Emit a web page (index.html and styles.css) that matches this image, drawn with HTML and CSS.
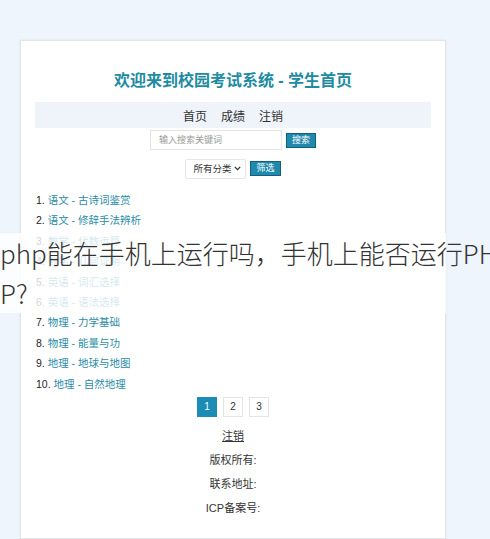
FILE: index.html
```html
<!DOCTYPE html>
<html lang="zh-CN">
<head>
<meta charset="utf-8">
<title>学生首页</title>
<link rel="stylesheet" href="styles.css">
</head>
<body>
<div class="page">
  <div class="card">
    <h1 class="title">欢迎来到校园考试系统 - 学生首页</h1>
    <nav class="nav">
      <a href="#">首页</a>
      <a href="#">成绩</a>
      <a href="#">注销</a>
    </nav>
    <form class="search">
      <input class="search-input" type="text" placeholder="输入搜索关键词">
      <button class="btn" type="button">搜索</button>
    </form>
    <form class="filter">
      <div class="select-wrap">
        <select class="filter-select">
          <option>所有分类</option>
        </select>
        <svg class="chevron" width="7" height="5" viewBox="0 0 7 5"><path d="M0.8 0.9 L3.5 3.6 L6.2 0.9" fill="none" stroke="#333" stroke-width="1.3"/></svg>
      </div>
      <button class="btn" type="button">筛选</button>
    </form>
    <ol class="list">
      <li><a href="#">语文 - 古诗词鉴赏</a></li>
      <li><a href="#">语文 - 修辞手法辨析</a></li>
      <li><a href="#">数学 - 代数运算</a></li>
      <li><a href="#">数学 - 几何证明</a></li>
      <li><a href="#">英语 - 词汇选择</a></li>
      <li><a href="#">英语 - 语法选择</a></li>
      <li><a href="#">物理 - 力学基础</a></li>
      <li><a href="#">物理 - 能量与功</a></li>
      <li><a href="#">地理 - 地球与地图</a></li>
      <li><a href="#">地理 - 自然地理</a></li>
    </ol>
    <div class="pager">
      <span class="page-btn active">1</span>
      <span class="page-btn">2</span>
      <span class="page-btn">3</span>
    </div>
    <footer class="footer">
      <a class="logout" href="#">注销</a>
      <p>版权所有:</p>
      <p>联系地址:</p>
      <p>ICP备案号:</p>
    </footer>
  </div>
  <div class="overlay">
    <div class="overlay-text">php能在手机上运行吗，手机上能否运行PH<br>P?</div>
  </div>
</div>
</body>
</html>
```

FILE: styles.css
```css
html, body {
  margin: 0;
  padding: 0;
}
body {
  background: #eef5fc;
  font-family: "Liberation Sans", "Noto Sans CJK SC", sans-serif;
  color: #333;
}
.page {
  position: relative;
  width: 490px;
  height: 539px;
  overflow: hidden;
  padding: 40px 0 0 20px;
  box-sizing: border-box;
}
.card {
  width: 426px;
  box-sizing: border-box;
  background: #fff;
  border: 1px solid #e2e4e6;
  box-shadow: 0 0 3px rgba(0,0,0,0.06);
  padding: 29px 14px 18px 14px;
  display: flex;
  flex-direction: column;
  align-items: center;
}
.title {
  margin: 0;
  font-size: 16px;
  line-height: 22px;
  font-weight: bold;
  color: #1e8ba3;
  font-family: "Liberation Sans", "Noto Sans CJK SC", sans-serif;
}
.nav {
  margin-top: 10px;
  align-self: stretch;
  height: 26px;
  background: #eef4fa;
  display: flex;
  justify-content: center;
  align-items: center;
  gap: 14px;
  font-size: 12px;
}
.nav a {
  color: #333;
  text-decoration: none;
}
.search {
  margin: 2px 0 0 0;
  display: flex;
  align-items: center;
  gap: 4px;
}
.search-input {
  width: 132px;
  height: 20px;
  box-sizing: border-box;
  border: 1px solid #e4e4e4;
  padding: 0 8px;
  font-size: 9px;
  font-family: "Liberation Sans", "Noto Sans CJK SC", sans-serif;
  color: #999;
  outline: none;
}
.search-input::placeholder {
  color: #9a9a9a;
}
.btn {
  height: 15px;
  padding: 0 5px;
  box-sizing: border-box;
  background: #1f8aae;
  color: #fff;
  border: 1px solid #175e7a;
  font-size: 9px;
  line-height: 13px;
  font-family: "Liberation Sans", "Noto Sans CJK SC", sans-serif;
  border-radius: 0;
}
.filter {
  margin: 8px 0 0 0;
  display: flex;
  align-items: center;
  gap: 4px;
}
.select-wrap {
  position: relative;
  width: 61px;
  height: 20px;
}
.filter-select {
  appearance: none;
  -webkit-appearance: none;
  width: 61px;
  height: 20px;
  box-sizing: border-box;
  border: 1px solid #e6e6e6;
  border-radius: 2px;
  background: #fff;
  font-size: 9.5px;
  color: #333;
  font-family: "Liberation Sans", "Noto Sans CJK SC", sans-serif;
  padding: 0 0 0 7px;
  outline: none;
}
.chevron {
  position: absolute;
  right: 5px;
  top: 8px;
  pointer-events: none;
}
.list {
  margin: 12px 0 0 0;
  padding: 0 0 0 1px;
  align-self: stretch;
  list-style: none;
  counter-reset: item;
  font-size: 10.5px;
}
.list li {
  counter-increment: item;
  height: 20.4px;
  line-height: 20.4px;
  color: #222;
}
.list li::before {
  content: counter(item) ". ";
}
.list a {
  color: #2b8ca7;
  text-decoration: none;
}
.pager {
  margin-top: 3px;
  display: flex;
  gap: 6px;
}
.page-btn {
  width: 20px;
  height: 20px;
  box-sizing: border-box;
  border: 1px solid #e4e4e4;
  display: flex;
  align-items: center;
  justify-content: center;
  font-size: 10px;
  color: #333;
  background: #fff;
}
.page-btn.active {
  background: #1b8db4;
  border-color: #1b8db4;
  color: #fff;
}
.footer {
  margin-top: 7px;
  display: flex;
  flex-direction: column;
  align-items: center;
  font-size: 11px;
}
.footer p {
  margin: 0;
  line-height: 24px;
  color: #333;
}
.logout {
  line-height: 24px;
  color: #333;
  text-decoration: underline;
}
.overlay {
  position: absolute;
  top: 233px;
  left: 0;
  width: 446px;
  height: 80px;
  background: rgba(255,255,255,0.8);
}
.overlay-text {
  width: 490px;
  white-space: nowrap;
  font-family: "Noto Sans CJK SC Light", "Noto Sans CJK SC", sans-serif;
  font-weight: 300;
  font-size: 26px;
  line-height: 40px;
  color: #333;
}
```
